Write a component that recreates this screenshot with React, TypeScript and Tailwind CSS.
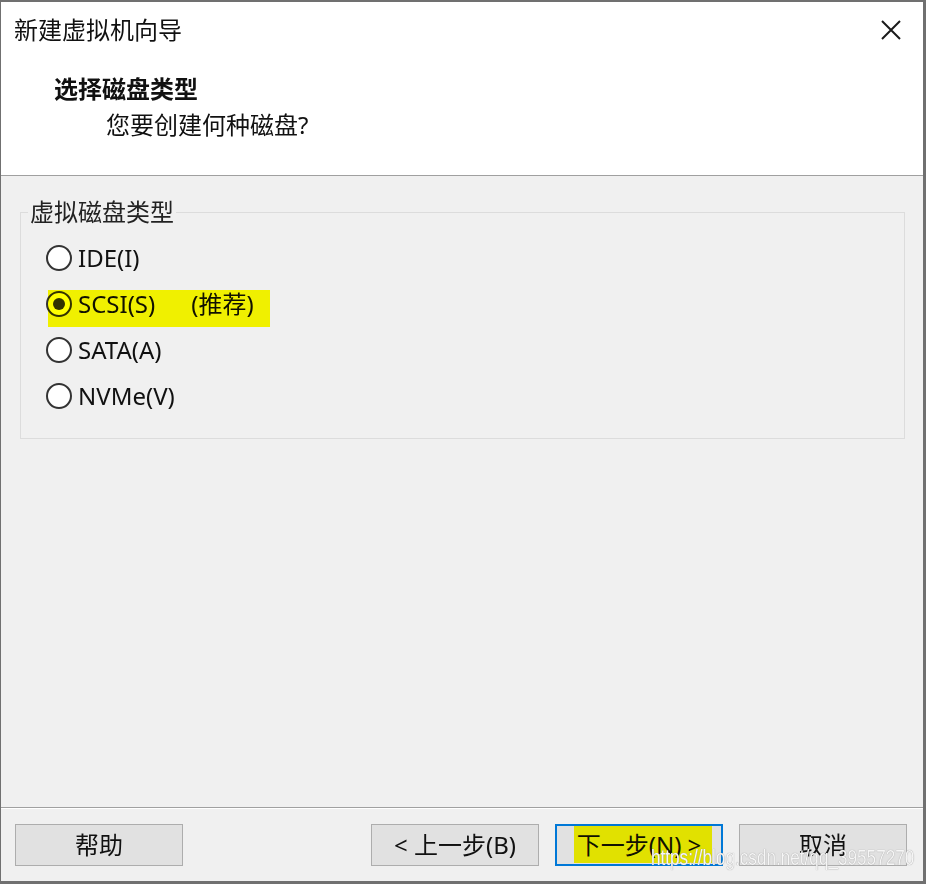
import React from 'react';

const FONT = '[font-family:"Noto_Sans","Noto_Sans_CJK_SC",sans-serif]';

const OPTIONS = [
  { id: 'ide', label: 'IDE(I)' },
  { id: 'scsi', label: 'SCSI(S)', hint: '(推荐)' },
  { id: 'sata', label: 'SATA(A)' },
  { id: 'nvme', label: 'NVMe(V)' },
];

function Radio({ checked }: { checked: boolean }) {
  return (
    <span className="flex h-[26px] w-[26px] shrink-0 items-center justify-center rounded-full border-2 border-[#333] bg-white">
      {checked && <span className="h-[12px] w-[12px] rounded-full bg-[#333]" />}
    </span>
  );
}

function Button({ children, primary }: { children: React.ReactNode; primary?: boolean }) {
  return (
    <button
      className={`flex h-[42px] w-[168px] items-center justify-center bg-[#e1e1e1] text-[24px] leading-[30px] text-[#111] ${
        primary ? 'border-2 border-[#0078d7]' : 'border border-[#adadad]'
      }`}
    >
      {children}
    </button>
  );
}

export default function App() {
  return (
    <div
      className={`relative flex h-[884px] w-[926px] flex-col overflow-hidden border-t-2 border-l border-r-[3px] border-b-[3px] border-[#707070] bg-[#f0f0f0] ${FONT}`}
    >
      {/* Header */}
      <div className="relative h-[174px] border-b border-[#a0a0a0] bg-white">
        <div className="pl-[13px] pt-[13px] text-[24px] leading-[30px] text-[#111]">新建虚拟机向导</div>
        <button className="absolute right-[21px] top-[17px] flex h-[22px] w-[22px] items-center justify-center">
          <svg width="20" height="20" viewBox="0 0 20 20">
            <path d="M1 1 L19 19 M19 1 L1 19" stroke="#1a1a1a" strokeWidth="2" />
          </svg>
        </button>
        <div className="pl-[53px] pt-[29px] text-[24px] font-bold leading-[30px] text-[#111]">选择磁盘类型</div>
        <div className="pl-[105px] pt-[6px] text-[24px] leading-[30px] text-[#111]">您要创建何种磁盘?</div>
      </div>

      {/* Body */}
      <div className="flex-1 px-[19px] pt-[24px]">
        <fieldset className="h-[239px] w-[885px] border border-[#dcdcdc]">
          <legend className="ml-[7px] px-[2px] text-[24px] leading-[24px] text-[#222]">虚拟磁盘类型</legend>
          <div className="flex flex-col gap-[20px] pl-[25px] pt-[21px]">
            {OPTIONS.map(o => (
              <div key={o.id} className="relative flex h-[26px] items-center">
                <Radio checked={o.id === 'scsi'} />
                <span className="ml-[6px] text-[24px] leading-[26px] text-[#111]">{o.label}</span>
                {o.hint && <span className="ml-[36px] text-[24px] leading-[26px] text-[#111]">{o.hint}</span>}
                {o.id === 'scsi' && (
                  <span className="pointer-events-none absolute left-[2px] top-0 h-[37px] w-[222px] -translate-y-[1px] bg-[#ffff00] mix-blend-multiply" />
                )}
              </div>
            ))}
          </div>
        </fieldset>
      </div>

      {/* Footer */}
      <div className="border-t border-[#a0a0a0]">
        <div className="flex h-[73px] items-start border-t border-white px-[14px] pt-[15px]">
          <Button>帮助</Button>
          <div className="ml-auto flex gap-[16px] pr-[2px]">
            <Button>&lt; 上一步(B)</Button>
            <div className="relative">
              <Button primary>下一步(N) &gt;</Button>
              <span className="pointer-events-none absolute left-[19px] top-[2px] h-[37px] w-[138px] bg-[#ffff00] mix-blend-multiply" />
            </div>
            <Button>取消</Button>
          </div>
        </div>
      </div>

      <span className="pointer-events-none absolute left-[650px] top-[841px] inline-block origin-left scale-x-[0.78] whitespace-nowrap [font-family:'Liberation_Sans',sans-serif] text-[22px] leading-[30px] text-[#f6f6f6] [text-shadow:0_0_1px_#7a7a7a]">
        https://blog.csdn.net/qq_39557270
      </span>
    </div>
  );
}
